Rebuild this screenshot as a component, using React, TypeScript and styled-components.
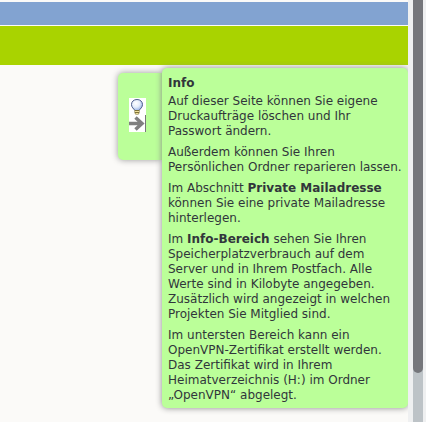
import React from "react";
import styled, { createGlobalStyle } from "styled-components";

const GlobalStyle = createGlobalStyle`
  * {
    box-sizing: border-box;
  }
  html, body {
    margin: 0;
    background: #fbfaf8;
  }
  body {
    font-family: Verdana, "DejaVu Sans", sans-serif;
    font-size: 12px;
    line-height: 15px;
    color: #31363b;
  }
`;

const Page = styled.div`
  display: flex;
  height: 100vh;
  overflow: hidden;
`;

const Content = styled.div`
  flex: 1;
  min-width: 0;
  padding-top: 2px;
  overflow: hidden;
`;

const Band = styled.div<{ $color: string; $height: number }>`
  height: ${(p) => p.$height}px;
  margin-bottom: 1px;
  background: ${(p) => p.$color};
`;

const Help = styled.main`
  display: flex;
  justify-content: flex-end;
  align-items: flex-start;
  padding-top: 2px;
`;

const HelpTab = styled.button`
  width: 44px;
  height: 87px;
  margin: 5px 0 0;
  padding: 0 0 4px 11px;
  border: 0;
  border-radius: 5px 0 0 5px;
  background: #bbff99;
  box-shadow: 0 0 6px #999999;
  display: flex;
  align-items: center;
`;

const HelpPanel = styled.section`
  width: 246px;
  padding: 8px 6px 5px;
  border-radius: 5px;
  background: #bbff99;
  box-shadow: 0 0 6px #888888;
`;

const Title = styled.h1`
  margin: 0 0 3px;
  font-size: 12px;
  line-height: 15px;
`;

const Text = styled.p`
  margin: 0 0 6px;
  &:last-child {
    margin-bottom: 0;
  }
`;

const Scrollbar = styled.div`
  flex: 0 0 18px;
  padding: 0 3px 0 5px;
  background: #eff0f1;
`;

const Track = styled.div`
  height: 100%;
  background: #bdc3c7;
`;

const Thumb = styled.div`
  height: 373px;
  border-radius: 0 0 5px 5px;
  background: #75767b;
`;

const BulbArrow = () => (
  <svg width="17" height="34" viewBox="0 0 17 34" aria-hidden="true">
    <defs>
      <radialGradient id="glass" cx="0.4" cy="0.35" r="0.7">
        <stop offset="0" stopColor="#ffffff" />
        <stop offset="0.5" stopColor="#e4edfb" />
        <stop offset="1" stopColor="#8fabe2" />
      </radialGradient>
    </defs>
    <rect width="17" height="34" fill="#ffffff" />
    <path
      d="M8 1.500C4.700 1.500 2.500 3.700 2.500 6.500C2.500 9.500 4.600 10.500 6 12.500H10C11.400 10.500 13.500 9.500 13.500 6.500C13.500 3.700 11.300 1.500 8 1.500Z"
      fill="url(#glass)"
      stroke="#4f5f8c"
    />
    <path d="M5.500 12H10.500V15L9.500 16.500H6.500L5.500 15Z" fill="#807238" />
    <path d="M6 13.500H10M6.500 15.500H9.500" stroke="#eee09a" />
    <path d="M0 25.500H12M6.500 19.500L13 25.500L6.500 31.500" fill="none" stroke="#808080" strokeWidth="3.500" />
    <path d="M16.500 17V34" stroke="#777777" />
  </svg>
);

export default function App() {
  return (
    <>
      <GlobalStyle />
      <Page>
        <Content>
          <Band $color="#82a3d1" $height={23} />
          <Band $color="#a9d300" $height={39} />
          <Help>
            <HelpTab type="button" aria-label="Info ausblenden">
              <BulbArrow />
            </HelpTab>
            <HelpPanel>
              <Title>Info</Title>
              <Text>Auf dieser Seite können Sie eigene Druckaufträge löschen und Ihr Passwort ändern.</Text>
              <Text>Außerdem können Sie Ihren Persönlichen Ordner reparieren lassen.</Text>
              <Text>
                Im Abschnitt <strong>Private Mailadresse</strong> können Sie eine private Mailadresse hinterlegen.
              </Text>
              <Text>
                Im <strong>Info-Bereich</strong> sehen Sie Ihren Speicherplatzverbrauch auf dem Server und in Ihrem
                Postfach. Alle Werte sind in Kilobyte angegeben. Zusätzlich wird angezeigt in welchen Projekten Sie
                Mitglied sind.
              </Text>
              <Text>
                Im untersten Bereich kann ein OpenVPN-Zertifikat erstellt werden. Das Zertifikat wird in Ihrem
                Heimatverzeichnis (H:) im Ordner „OpenVPN“ abgelegt.
              </Text>
            </HelpPanel>
          </Help>
        </Content>
        <Scrollbar>
          <Track>
            <Thumb />
          </Track>
        </Scrollbar>
      </Page>
    </>
  );
}
